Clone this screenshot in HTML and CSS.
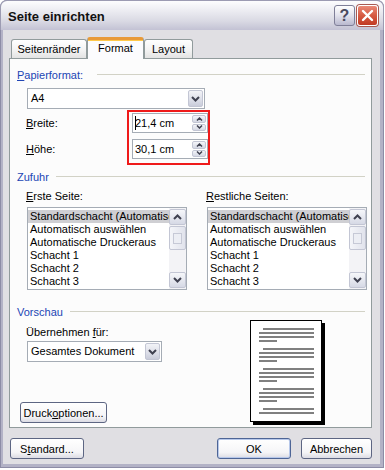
FILE: index.html
```html
<!DOCTYPE html>
<html lang="de">
<head>
    <meta charset="UTF-8">
    <title>Seite einrichten</title>
    <link rel="stylesheet" href="styles.css">
</head>
<body>
    <div class="window">
        <div class="titlebar">
            <span class="title">Seite einrichten</span>
            <span class="cap-btn help">?</span>
            <span class="cap-btn close">
                <svg width="13" height="13" viewBox="0 0 13 13"><path d="M2 2 L11 11 M11 2 L2 11" stroke="#fff" stroke-width="2.4" stroke-linecap="round"/></svg>
            </span>
        </div>
        <div class="client">
            <div class="tabs">
                <div class="tab tab-margins">Seitenränder</div>
                <div class="tab tab-format active">Format</div>
                <div class="tab tab-layout">Layout</div>
            </div>
            <div class="panel">
                <div class="group-head head-paper"><span><u>P</u>apierformat:</span></div>
                <div class="select select-paper">
                    <span class="value">A4</span>
                    <span class="drop">
                        <svg width="9" height="6" viewBox="0 0 9 6"><path d="M1 1 L4.5 4.5 L8 1" fill="none" stroke="#3f4150" stroke-width="2"/></svg>
                    </span>
                </div>
                <div class="size-block">
                    <div class="size-labels">
                        <div class="size-label"><u>B</u>reite:</div>
                        <div class="size-label"><u>H</u>öhe:</div>
                    </div>
                    <div class="marked">
                        <div class="spin">
                            <span class="value"><span class="caret"></span>21,4 cm</span>
                            <span class="arrows">
                                <span class="arrow-btn"><svg width="7" height="4" viewBox="0 0 7 4"><path d="M1 3.5 L3.5 1 L6 3.5" fill="none" stroke="#3f4150" stroke-width="1.5"/></svg></span>
                                <span class="arrow-btn"><svg width="7" height="4" viewBox="0 0 7 4"><path d="M1 0.5 L3.5 3 L6 0.5" fill="none" stroke="#3f4150" stroke-width="1.5"/></svg></span>
                            </span>
                        </div>
                        <div class="spin">
                            <span class="value">30,1 cm</span>
                            <span class="arrows">
                                <span class="arrow-btn"><svg width="7" height="4" viewBox="0 0 7 4"><path d="M1 3.5 L3.5 1 L6 3.5" fill="none" stroke="#3f4150" stroke-width="1.5"/></svg></span>
                                <span class="arrow-btn"><svg width="7" height="4" viewBox="0 0 7 4"><path d="M1 0.5 L3.5 3 L6 0.5" fill="none" stroke="#3f4150" stroke-width="1.5"/></svg></span>
                            </span>
                        </div>
                    </div>
                </div>

                <div class="group-head head-feed"><span>Zufuhr</span></div>
                <div class="feed">
                    <div class="feed-col">
                        <div class="field-label"><u>E</u>rste Seite:</div>
                        <div class="listbox">
                            <div class="items">
                                <div class="item selected">Standardschacht (Automatisch)</div>
                                <div class="item">Automatisch auswählen</div>
                                <div class="item">Automatische Druckeraus</div>
                                <div class="item">Schacht 1</div>
                                <div class="item">Schacht 2</div>
                                <div class="item">Schacht 3</div>
                            </div>
                            <div class="scrollbar">
                                <span class="sb-btn"><svg width="9" height="6" viewBox="0 0 9 6"><path d="M1 5 L4.5 1.5 L8 5" fill="none" stroke="#3f4150" stroke-width="2"/></svg></span>
                                <span class="sb-thumb"><span class="grip"></span></span>
                                <span class="sb-track"></span>
                                <span class="sb-btn"><svg width="9" height="6" viewBox="0 0 9 6"><path d="M1 1 L4.5 4.5 L8 1" fill="none" stroke="#3f4150" stroke-width="2"/></svg></span>
                            </div>
                        </div>
                    </div>
                    <div class="feed-col">
                        <div class="field-label"><u>R</u>estliche Seiten:</div>
                        <div class="listbox">
                            <div class="items">
                                <div class="item selected">Standardschacht (Automatisch)</div>
                                <div class="item">Automatisch auswählen</div>
                                <div class="item">Automatische Druckeraus</div>
                                <div class="item">Schacht 1</div>
                                <div class="item">Schacht 2</div>
                                <div class="item">Schacht 3</div>
                            </div>
                            <div class="scrollbar">
                                <span class="sb-btn"><svg width="9" height="6" viewBox="0 0 9 6"><path d="M1 5 L4.5 1.5 L8 5" fill="none" stroke="#3f4150" stroke-width="2"/></svg></span>
                                <span class="sb-thumb"><span class="grip"></span></span>
                                <span class="sb-track"></span>
                                <span class="sb-btn"><svg width="9" height="6" viewBox="0 0 9 6"><path d="M1 1 L4.5 4.5 L8 1" fill="none" stroke="#3f4150" stroke-width="2"/></svg></span>
                            </div>
                        </div>
                    </div>
                </div>

                <div class="group-head head-preview"><span>Vorschau</span></div>
                <div class="preview">
                    <div class="preview-left">
                        <div class="field-label">Übernehmen <u>f</u>ür:</div>
                        <div class="select select-apply">
                            <span class="value">Gesamtes Dokument</span>
                            <span class="drop">
                                <svg width="9" height="6" viewBox="0 0 9 6"><path d="M1 1 L4.5 4.5 L8 1" fill="none" stroke="#3f4150" stroke-width="2"/></svg>
                            </span>
                        </div>
                        <button class="btn btn-print">Druck<u>o</u>ptionen...</button>
                    </div>
                    <svg class="page" width="75" height="105" viewBox="0 0 75 105">
                        <rect x="3" y="3" width="72" height="102" fill="#000"/>
                        <rect x="0.5" y="0.5" width="71" height="101" fill="#fff" stroke="#000"/>
                        <g fill="#808080">
                            <rect x="13" y="8" width="51" height="2"/>
                            <rect x="9" y="12" width="55" height="2"/>
                            <rect x="9" y="16" width="55" height="2"/>
                            <rect x="9" y="20" width="18" height="2"/>
                            <rect x="13" y="28" width="51" height="2"/>
                            <rect x="9" y="32" width="55" height="2"/>
                            <rect x="9" y="36" width="55" height="2"/>
                            <rect x="9" y="40" width="18" height="2"/>
                            <rect x="13" y="48" width="51" height="2"/>
                            <rect x="9" y="52" width="55" height="2"/>
                            <rect x="9" y="56" width="55" height="2"/>
                            <rect x="9" y="60" width="18" height="2"/>
                            <rect x="13" y="68" width="51" height="2"/>
                            <rect x="9" y="72" width="55" height="2"/>
                            <rect x="9" y="76" width="55" height="2"/>
                            <rect x="9" y="80" width="18" height="2"/>
                            <rect x="13" y="88" width="51" height="2"/>
                            <rect x="9" y="92" width="55" height="2"/>
                        </g>
                    </svg>
                </div>
            </div>
            <div class="footer">
                <button class="btn btn-standard">S<u>t</u>andard...</button>
                <button class="btn btn-ok">OK</button>
                <button class="btn btn-cancel">Abbrechen</button>
            </div>
        </div>
    </div>
</body>
</html>
```

FILE: styles.css
```css
body {
    margin: 0;
    background: #fff;
    font-family: "Liberation Sans", Arial, sans-serif;
    font-size: 11px;
    color: #000;
}
u {
    text-decoration-thickness: 1px;
    text-underline-offset: 1px;
}
.window {
    width: 384px;
    height: 468px;
    box-sizing: border-box;
    padding: 0 4px 4px 3px;
    background: #b3b2c6;
    border-radius: 7px 7px 0 0;
    box-shadow: inset 0 0 0 1px #8d8ca6;
    display: flex;
    flex-direction: column;
}
.titlebar {
    height: 30px;
    margin: 0 -4px 0 -3px;
    padding: 0 5px 0 7px;
    display: flex;
    align-items: center;
    background: linear-gradient(#fdfdfe, #eeeef3 30%, #d9d9e3 70%, #c3c2d4);
    border: 1px solid #9c9bb2;
    border-bottom: none;
    border-radius: 7px 7px 0 0;
    box-sizing: border-box;
}
.title {
    flex: 1;
    font-weight: bold;
    font-size: 13px;
    color: #111;
    padding-top: 1px;
}
.cap-btn {
    width: 21px;
    height: 21px;
    box-sizing: border-box;
    border-radius: 3px;
    display: flex;
    align-items: center;
    justify-content: center;
}
.help {
    margin-right: 2px;
    border: 1px solid #7f7f98;
    background: linear-gradient(#ffffff, #e2e2ec 50%, #b9b9cf);
    font-weight: bold;
    font-size: 16px;
    color: #4a4a5e;
}
.close {
    border: 1px solid #fff;
    box-shadow: 0 0 0 1px #a85a52;
    background: linear-gradient(#e98a78, #d65a42 50%, #c13a24);
}
.client {
    flex: 1;
    background: #e0dfe3;
    padding: 7px 8px 0 6px;
    display: flex;
    flex-direction: column;
}
.tabs {
    height: 21px;
    padding-left: 2px;
    display: flex;
    align-items: flex-start;
}
.tab {
    position: relative;
    margin-top: 2px;
    height: 19px;
    box-sizing: border-box;
    border: 1px solid #919b9c;
    border-bottom: none;
    border-radius: 3px 3px 0 0;
    background: linear-gradient(#ffffff, #f2f2f2 60%, #e3e3e3);
    text-align: center;
    line-height: 18px;
}
.tab-margins {
    width: 76px;
}
.tab-format {
    width: 57px;
}
.tab-layout {
    width: 49px;
}
.tab.active {
    z-index: 1;
    margin-top: 0;
    height: 22px;
    line-height: 17px;
    border-top: 3px solid #e89a38;
    border-radius: 3px 3px 0 0;
    box-shadow: inset 0 1px 0 #ffc94a;
    background: #fcfcfe;
}
.panel {
    height: 370px;
    box-sizing: border-box;
    border: 1px solid #919b9c;
    background: #fcfcfc;
    padding: 9px 6px 0 7px;
    display: flex;
    flex-direction: column;
}
.group-head {
    height: 13px;
    display: flex;
    align-items: center;
    color: #2145b4;
}
.group-head::after {
    content: '';
    flex: 1;
    height: 1px;
    margin-left: 7px;
    background: #d2d2c6;
}
.head-paper::after {
    margin-left: 14px;
}
.select {
    height: 21px;
    box-sizing: border-box;
    border: 1px solid #a5acb5;
    background: #fff;
    display: flex;
}
.select .value {
    flex: 1;
    padding-left: 3px;
    line-height: 19px;
}
.select .drop {
    width: 15px;
    margin: 1px;
    box-sizing: border-box;
    border: 1px solid #c3c6d4;
    border-radius: 2px;
    background: linear-gradient(#f2f3f7, #dcdee8 60%, #c9ccda);
    display: flex;
    align-items: center;
    justify-content: center;
}
.select-paper {
    width: 178px;
    margin: 7px 0 0 10px;
}
.size-block {
    display: flex;
    margin-top: 1px;
}
.size-labels {
    width: 110px;
    padding: 3px 0 0 9px;
    box-sizing: border-box;
}
.size-label {
    height: 20px;
    line-height: 20px;
    margin-bottom: 6px;
}
.marked {
    border: 2px solid #ef1a1a;
    padding: 1px 0 4px 3px;
    display: flex;
    flex-direction: column;
    gap: 6px;
}
.spin {
    width: 76px;
    height: 20px;
    box-sizing: border-box;
    border: 1px solid #a5acb5;
    background: #fff;
    display: flex;
}
.spin .value {
    flex: 1;
    padding-left: 2px;
    line-height: 18px;
}
.caret {
    display: inline-block;
    width: 0;
    height: 14px;
    border-left: 1px solid #000;
    margin-right: -1px;
    vertical-align: -3px;
}
.arrows {
    width: 15px;
    padding: 1px 1px 1px 0;
    box-sizing: border-box;
    display: flex;
    flex-direction: column;
    gap: 1px;
}
.arrow-btn {
    flex: 1;
    border: 1px solid #c3c6d4;
    border-radius: 2px;
    background: linear-gradient(#f4f5f9, #d5d8e4);
    display: flex;
    align-items: center;
    justify-content: center;
}
.head-feed {
    margin-top: 5px;
}
.feed {
    display: flex;
    gap: 20px;
    padding-left: 10px;
    margin-top: 7px;
}
.feed-col {
    width: 160px;
}
.field-label {
    height: 13px;
    line-height: 13px;
    margin-left: -1px;
}
.listbox {
    margin-top: 4px;
    height: 83px;
    box-sizing: border-box;
    border: 1px solid #a5acb5;
    background: #fff;
    display: flex;
}
.items {
    flex: 1;
    min-width: 0;
    padding-top: 2px;
    overflow: hidden;
}
.item {
    height: 13px;
    line-height: 13px;
    padding-left: 2px;
    white-space: nowrap;
    overflow: hidden;
}
.item.selected {
    background: #cfcfd3;
}
.scrollbar {
    width: 17px;
    display: flex;
    flex-direction: column;
    background: #f3f3f6;
    padding: 1px 0;
    gap: 1px;
}
.sb-btn {
    height: 16px;
    box-sizing: border-box;
    border: 1px solid #c3c6d4;
    border-radius: 2px;
    background: linear-gradient(#f6f7fa, #d6d9e5);
    display: flex;
    align-items: center;
    justify-content: center;
}
.sb-thumb {
    height: 24px;
    box-sizing: border-box;
    border: 1px solid #c3c6d4;
    border-radius: 2px;
    background: linear-gradient(90deg, #f4f5f9, #e1e3ec);
    display: flex;
    align-items: center;
    justify-content: center;
}
.grip {
    width: 7px;
    height: 9px;
    border: 1px solid #c6c9d6;
    background: #eceef4;
}
.sb-track {
    flex: 1;
}
.head-preview {
    margin-top: 15px;
}
.preview {
    flex: 1;
    display: flex;
    padding-top: 2px;
}
.preview-left {
    flex: 1;
    display: flex;
    flex-direction: column;
    align-items: flex-start;
    padding: 6px 0 4px 10px;
}
.select-apply {
    width: 135px;
    margin-top: 2px;
}
.btn {
    height: 21px;
    box-sizing: border-box;
    border: 1px solid #5d6683;
    border-radius: 3px;
    background: linear-gradient(#ffffff, #f5f5f7 70%, #dcdce4);
    font-family: "Liberation Sans", Arial, sans-serif;
    font-size: 11px;
    color: #000;
    padding: 0;
}
.btn-print {
    margin-top: auto;
    margin-left: -7px;
    width: 87px;
    height: 21px;
}
.page {
    margin: 0 40px 0 0;
}
.footer {
    display: flex;
    margin-top: 10px;
    padding-left: 1px;
}
.btn-standard {
    width: 74px;
}
.btn-ok {
    width: 74px;
    margin-left: auto;
    border-color: #4e6596;
    box-shadow: inset 0 0 0 1px #b7c8ea;
}
.btn-cancel {
    width: 71px;
    margin-left: 10px;
}
```
